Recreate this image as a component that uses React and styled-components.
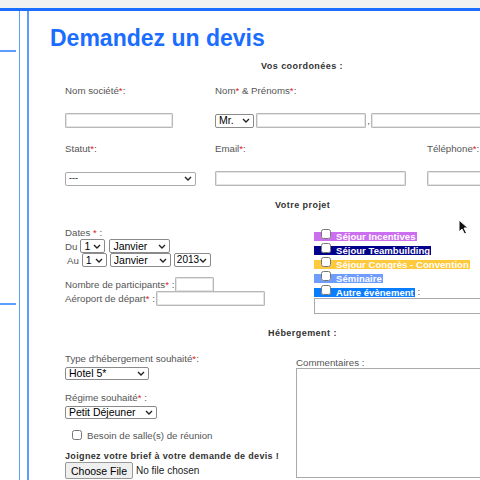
import React from 'react';
import styled, { createGlobalStyle } from 'styled-components';

const GlobalStyle = createGlobalStyle`
  body {
    margin: 0;
    background: #fff;
    font-family: "Liberation Sans", Arial, sans-serif;
    overflow: hidden;
  }
`;

const chevron =
  "url(\"data:image/svg+xml;utf8,<svg xmlns='http://www.w3.org/2000/svg' width='8' height='5' viewBox='0 0 8 5'><path d='M1 1 L4 4 L7 1' fill='none' stroke='%23222' stroke-width='1.4'/></svg>\")";

const Page = styled.div`
  width: 480px;
  height: 480px;
  position: relative;
  overflow: hidden;
`;

const TopStrip = styled.div`
  height: 8px;
  background: #f1f1f1;
  border-bottom: 3px solid #1a6dff;
`;

const Body = styled.div`
  display: flex;
  height: 469px;
`;

const Sidebar = styled.div`
  width: 19px;
  flex-shrink: 0;
  border-right: 1px solid #5c9dff;
  display: flex;
  flex-direction: column;
`;

const SideItem = styled.div`
  width: 16px;
  height: ${(p) => p.h}px;
  border-bottom: 2px solid #5c9dff;
`;

const Rail = styled.div`
  width: 7px;
  flex-shrink: 0;
  border-right: 2px solid #5c9dff;
`;

const Content = styled.div`
  flex: 1;
  min-width: 0;
  padding: 13px 0 0 21px;
  white-space: nowrap;
`;

const Title = styled.h1`
  margin: 0;
  font-size: 23px;
  font-weight: bold;
  color: #1a6dff;
  line-height: 28px;
`;

const Form = styled.div`
  padding-left: 15px;
  font-size: 9.7px;
  color: #555;
`;

const SectionTitle = styled.div`
  font-weight: bold;
  color: #333;
  font-size: 9px;
  letter-spacing: ${(p) => p.ls || 0.45}px;
  padding-left: ${(p) => p.indent}px;
  margin: ${(p) => p.m};
`;

const Row = styled.div`
  display: flex;
  align-items: center;
  height: ${(p) => p.h || 14}px;
  margin-top: ${(p) => p.mt || 0}px;
`;

const Cell = styled.div`
  width: ${(p) => p.w}px;
  flex-shrink: 0;
  display: flex;
  align-items: center;
`;

const Star = styled.span`
  color: #e02020;
`;

const TextInput = styled.input`
  width: ${(p) => p.w}px;
  height: 15px;
  box-sizing: border-box;
  border: 1px solid #b8b8b8;
  box-shadow: inset 0 0 0 1px #e4e4e4;
  border-radius: 1px;
  padding: 0 2px;
  margin: 0 0 0 ${(p) => p.ml || 0}px;
  flex-shrink: 0;
  font-size: 10px;
`;

const Select = styled.select`
  appearance: none;
  display: block;
  width: ${(p) => p.w}px;
  height: ${(p) => p.h || 14}px;
  box-sizing: border-box;
  border: 1px solid ${(p) => (p.light ? '#aaa' : '#8a8a8a')};
  border-radius: 2px;
  background: #fff ${chevron} no-repeat right 3px center;
  color: #000;
  font-family: "Liberation Sans", Arial, sans-serif;
  font-size: ${(p) => p.fs || 10.5}px;
  line-height: 1;
  padding: 0 ${(p) => p.pr || 10}px 0 ${(p) => p.pl || 3}px;
  margin: ${(p) => p.mt || 0}px 0 0 ${(p) => p.ml || 0}px;
  flex-shrink: 0;
`;

const Comma = styled.span`
  width: 5px;
  text-align: center;
  color: #555;
`;

const Cols = styled.div`
  display: flex;
`;

const LeftCol = styled.div`
  width: ${(p) => p.w}px;
  flex-shrink: 0;
`;

const RightCol = styled.div`
  flex: 1;
  padding-top: ${(p) => p.pt || 0}px;
`;

const Line = styled.div`
  display: flex;
  align-items: center;
  height: ${(p) => p.h || 14}px;
  padding-left: ${(p) => p.pl || 0}px;
  margin-top: ${(p) => p.mt || 0}px;
`;

const Text = styled.span`
  margin-right: ${(p) => p.mr || 0}px;
`;

const ChoiceRow = styled.div`
  height: 14px;
  display: flex;
  align-items: center;
`;

const Band = styled.label`
  display: inline-flex;
  align-items: center;
  height: 9px;
  background: ${(p) => p.bg};
  color: #fff;
  font-weight: bold;
  font-size: 9.5px;
  letter-spacing: 0.05px;
  padding-right: 1px;
  margin-top: 2px;
`;

const Box = styled.input.attrs({ type: 'checkbox' })`
  width: 10px;
  height: 10px;
  margin: -5px 5px 0 7px;
`;

const WideInput = styled.input`
  display: block;
  width: 180px;
  height: 16px;
  box-sizing: border-box;
  border: 1px solid #aaa;
  margin: 0;
`;

const Textarea = styled.textarea`
  display: block;
  width: 190px;
  height: 110px;
  box-sizing: border-box;
  border: 1px solid #aaa;
  margin: 0;
  resize: none;
`;

const SmallBox = styled.input.attrs({ type: 'checkbox' })`
  width: 10px;
  height: 10px;
  margin: 0 5px 0 0;
`;

const FileButton = styled.button`
  font-family: "Liberation Sans", Arial, sans-serif;
  font-size: 10.5px;
  color: #000;
  height: 17px;
  padding: 0 5px;
  margin-right: 3px;
  border: 1px solid #999;
  border-radius: 2px;
  background: #efefef;
`;

const FileNote = styled.span`
  color: #222;
  font-size: 10px;
`;

const Cursor = styled.svg`
  position: absolute;
  left: 458px;
  top: 219px;
`;

const choices = [
  ['Séjour Incentives', '#cc6ef0'],
  ['Séjour Teambuilding', '#00008b'],
  ['Séjour Congrès - Convention', '#ffc93c'],
  ['Séminaire', '#6f9cff'],
  ['Autre évènement', '#0a7dff'],
];

export default function App() {
  return (
    <Page>
      <GlobalStyle />
      <TopStrip />
      <Body>
        <Sidebar>
          <SideItem h={39} />
          <SideItem h={251} />
        </Sidebar>
        <Rail />
        <Content>
          <Title>Demandez un devis</Title>
          <Form>
            <SectionTitle indent={196} m="9px 0 0">Vos coordonées :</SectionTitle>

            <Row mt={12}>
              <Cell w={150}><Text>Nom société<Star>*</Star>:</Text></Cell>
              <Cell w={212}><Text>Nom<Star>*</Star> &amp; Prénoms<Star>*</Star>:</Text></Cell>
            </Row>
            <Row mt={16} h={15}>
              <Cell w={150}><TextInput w={108} /></Cell>
              <Cell w={270}>
                <Select w={39}><option>Mr.</option></Select>
                <TextInput w={110} ml={2} />
                <Comma>,</Comma>
                <TextInput w={112} />
              </Cell>
            </Row>

            <Row mt={13}>
              <Cell w={150}><Text>Statut<Star>*</Star>:</Text></Cell>
              <Cell w={212}><Text>Email<Star>*</Star>:</Text></Cell>
              <Cell w={60}><Text>Téléphone<Star>*</Star>:</Text></Cell>
            </Row>
            <Row mt={16} h={15}>
              <Cell w={150}><Select w={131} fs={9} light><option>---</option></Select></Cell>
              <Cell w={212}><TextInput w={191} /></Cell>
              <Cell w={60}><TextInput w={60} /></Cell>
            </Row>

            <SectionTitle indent={210} m="14px 0 0">Votre projet</SectionTitle>

            <Cols>
              <LeftCol w={249}>
                <Line mt={15}><Text>Dates <Star>*</Star> :</Text></Line>
                <Line>
                  <Text mr={3}>Du</Text>
                  <Select w={25}><option>1</option></Select>
                  <Select w={61} ml={4}><option>Janvier</option></Select>
                </Line>
                <Line pl={2}>
                  <Text mr={3}>Au</Text>
                  <Select w={25}><option>1</option></Select>
                  <Select w={61} ml={3}><option>Janvier</option></Select>
                  <Select w={37} ml={3} fs={10} pl={2} pr={8}><option>2013</option></Select>
                </Line>
                <Line mt={10}>
                  <Text mr={1}>Nombre de participants<Star>*</Star> :</Text>
                  <TextInput w={39} />
                </Line>
                <Line>
                  <Text mr={1}>Aéroport de départ<Star>*</Star> :</Text>
                  <TextInput w={109} />
                </Line>
              </LeftCol>
              <RightCol pt={18}>
                {choices.map(([label, bg]) => (
                  <ChoiceRow key={label}>
                    <Band bg={bg}><Box />{label}</Band>
                    {label === 'Autre évènement' && <Text>&nbsp;:</Text>}
                  </ChoiceRow>
                ))}
                <WideInput />
              </RightCol>
            </Cols>

            <SectionTitle indent={203} m="14px 0 0">Hébergement :</SectionTitle>

            <Cols>
              <LeftCol w={231}>
                <Line mt={13}><Text>Type d'hébergement souhaité<Star>*</Star>:</Text></Line>
                <Select w={84} h={13} mt={2}><option>Hotel 5*</option></Select>
                <Line mt={10}><Text>Régime souhaité<Star>*</Star> :</Text></Line>
                <Select w={92} h={13} mt={2}><option>Petit Déjeuner</option></Select>
                <Line mt={9} pl={7}>
                  <SmallBox />
                  <Text>Besoin de salle(s) de réunion</Text>
                </Line>
                <SectionTitle indent={0} ls={0.35} m="9px 0 0">Joignez votre brief à votre demande de devis !</SectionTitle>
                <Line mt={1} h={17}>
                  <FileButton>Choose File</FileButton>
                  <FileNote>No file chosen</FileNote>
                </Line>
              </LeftCol>
              <RightCol pt={18}>
                <Line h={12}><Text>Commentaires :</Text></Line>
                <Textarea />
              </RightCol>
            </Cols>
          </Form>
        </Content>
      </Body>
      <Cursor width="11" height="16" viewBox="0 0 11 16">
        <path d="M1 1 L1 13 L4 10 L6.5 15 L8.5 14 L6 9 L10 9 Z" fill="#111" stroke="#fff" strokeWidth="1" />
      </Cursor>
    </Page>
  );
}
